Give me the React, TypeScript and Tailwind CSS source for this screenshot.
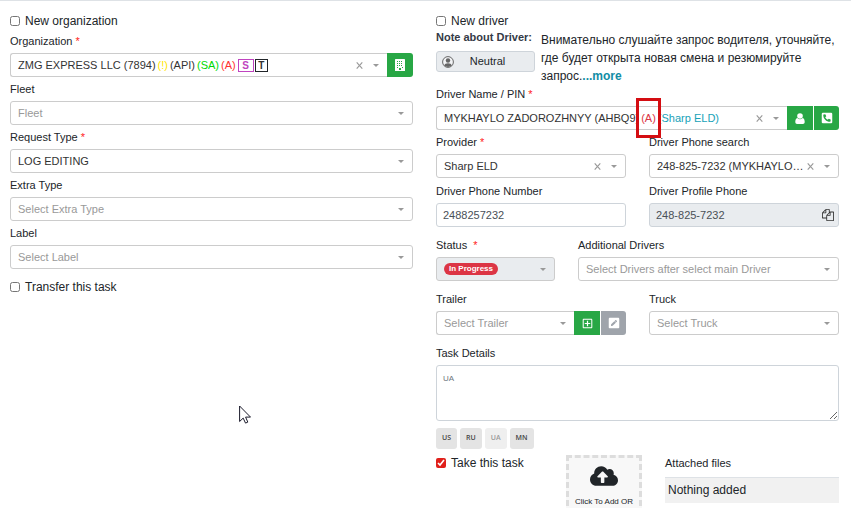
import React from "react";
import { FaPhoneSquareAlt, FaRegPlusSquare, FaPenSquare, FaCloudUploadAlt } from "react-icons/fa";

function Caret() {
  return (
    <svg viewBox="0 0 6 3" className="h-[3px] w-[6px] shrink-0 fill-[#999]" aria-hidden="true">
      <path d="M0 0h6L3 3z" />
    </svg>
  );
}

function ClearButton({ label }: { label: string }) {
  return (
    <button type="button" aria-label={label} className="shrink-0 text-[#999]">
      <svg viewBox="0 0 8 8" className="h-[7px] w-[7px] fill-none stroke-current" aria-hidden="true">
        <path d="M.8.5l6.4 7M7.2.5l-6.4 7" strokeWidth="1.3" />
      </svg>
    </button>
  );
}

function BuildingIcon() {
  return (
    <svg viewBox="0 0 10 12" className="h-3 w-[10px]" aria-hidden="true">
      <rect width="10" height="12" rx=".6" fill="#fff" />
      <g fill="#28a745">
        <path d="M2 2h1v1H2zM4 2h1v1H4zM6 2h1v1H6zM2 4h1v1H2zM4 4h1v1H4zM6 4h1v1H6zM2 6h1v1H2zM4 6h1v1H4zM6 6h1v1H6zM2 8h1v1H2zM7 8h1v1H7zM4 9h2v2H4z" />
      </g>
    </svg>
  );
}

function UserIcon() {
  return (
    <svg viewBox="0 0 10 11" className="h-[11px] w-[10px] fill-white" aria-hidden="true">
      <circle cx="5" cy="3" r="2.8" />
      <path d="M2.4 5c.7.8 1.600 1.200 2.600 1.200S6.900 5.800 7.600 5C9.300 5.300 9.700 7.200 9.700 9c0 1.200-.7 2-1.800 2H2.100C1 11 .3 10.200.3 9 .3 7.200.7 5.300 2.400 5z" />
    </svg>
  );
}

function FaceIcon() {
  return (
    <svg viewBox="0 0 12 12" className="size-3 shrink-0" aria-hidden="true">
      <circle cx="6" cy="6" r="5.400" fill="#fff" fillOpacity=".4" stroke="#666" strokeWidth="1" />
      <circle cx="6" cy="4.500" r="2.200" fill="#666" />
      <path d="M2.300 9.600C2.600 8 4 7.200 6 7.200s3.400.8 3.700 2.400C8.700 10.600 7.400 11 6 11s-2.700-.4-3.700-1.400z" fill="#666" />
    </svg>
  );
}

function FilesIcon() {
  return (
    <svg viewBox="0 0 1792 1792" className="size-3 fill-[#333]" aria-hidden="true">
      <path d="M1696 384q40 0 68 28t28 68v1216q0 40-28 68t-68 28h-960q-40 0-68-28t-28-68v-288h-544q-40 0-68-28t-28-68v-672q0-40 20-88t48-76l408-408q28-28 76-48t88-20h416q40 0 68 28t28 68v328q68-40 128-40h416zm-544 213l-299 299h299v-299zm-640-384l-299 299h299v-299zm196 647l316-316v-416h-384v416q0 40-28 68t-68 28h-416v640h512v-256q0-40 20-88t48-76zm956 804v-1152h-384v416q0 40-28 68t-68 28h-416v640h896z" />
    </svg>
  );
}

function Label({ htmlFor, required, children }: { htmlFor: string; required?: boolean; children: React.ReactNode }) {
  return (
    <label htmlFor={htmlFor} className="block h-4 text-[11px] leading-4 whitespace-nowrap">
      {children}
      {required && <span className="text-[#f22]"> *</span>}
    </label>
  );
}

function Check({ id, label, checked }: { id: string; label: string; checked?: boolean }) {
  return (
    <div className="flex h-4 items-center gap-[5px]">
      <input id={id} type="checkbox" defaultChecked={checked} className="size-[10px] accent-[#e0201b]" />
      <label htmlFor={id} className="text-[12px] leading-4">
        {label}
      </label>
    </div>
  );
}

function SelectBox({
  id,
  value,
  placeholder,
  clearLabel,
  joined,
}: {
  id: string;
  value: string;
  placeholder?: boolean;
  clearLabel?: string;
  joined?: boolean;
}) {
  return (
    <div
      className={
        "relative flex h-6 min-w-0 flex-1 items-center border border-[#ccc] bg-white " +
        (joined ? "rounded-l-[3px] border-r-0" : "rounded-[3px]")
      }
    >
      <select
        id={id}
        className={
          "h-full w-full min-w-0 appearance-none truncate bg-transparent pl-[7px] text-[11px] outline-none " +
          (clearLabel ? "pr-8 " : "pr-5 ") +
          (placeholder ? "text-[#999]" : "text-[#333]")
        }
      >
        <option>{value}</option>
      </select>
      <div className="pointer-events-none absolute inset-y-0 right-2 flex items-center gap-[10px]">
        {clearLabel && <ClearButton label={clearLabel} />}
        <Caret />
      </div>
    </div>
  );
}

function Field({
  id,
  label,
  required,
  children,
}: {
  id: string;
  label: string;
  required?: boolean;
  children: React.ReactNode;
}) {
  return (
    <div className="flex min-w-0 flex-col gap-1">
      <Label htmlFor={id} required={required}>
        {label}
      </Label>
      <div className="flex">{children}</div>
    </div>
  );
}

const iconButton = "flex h-6 w-[26px] shrink-0 items-center justify-center text-white";

function OrganizationColumn() {
  return (
    <section className="flex min-w-0 flex-col gap-1">
      <Check id="new-org" label="New organization" />
      <Field id="org" label="Organization" required>
        <div className="flex h-6 min-w-0 flex-1 items-center rounded-l-[3px] border border-r-0 border-[#ccc] pr-2 pl-[7px]">
          <button
            id="org"
            type="button"
            role="combobox"
            aria-expanded="false"
            className="flex min-w-0 flex-1 items-center gap-[2px] text-left text-[11px] whitespace-nowrap text-[#333]"
          >
            <span>ZMG EXPRESS LLC (7894)</span>
            <span className="text-[#ffe600]">(!)</span>
            <span>(API)</span>
            <span className="text-[#00d900]">(SA)</span>
            <span className="text-[#ff2f2f]">(A)</span>
            <span className="flex gap-px">
              <span className="h-[13px] w-4 border border-[#c044c0] text-center text-[10px] leading-[12px] font-bold text-[#c044c0]">
                S
              </span>
              <span className="h-[13px] w-[13px] border border-[#212529] text-center text-[10px] leading-[12px] font-bold">
                T
              </span>
            </span>
          </button>
          <div className="flex items-center gap-[10px]">
            <ClearButton label="Clear organization" />
            <Caret />
          </div>
        </div>
        <button type="button" aria-label="Organization details" className={iconButton + " rounded-r-[3px] bg-[#28a745]"}>
          <BuildingIcon />
        </button>
      </Field>
      <Field id="fleet" label="Fleet">
        <SelectBox id="fleet" value="Fleet" placeholder />
      </Field>
      <Field id="request" label="Request Type" required>
        <SelectBox id="request" value="LOG EDITING" />
      </Field>
      <Field id="extra" label="Extra Type">
        <SelectBox id="extra" value="Select Extra Type" placeholder />
      </Field>
      <Field id="label" label="Label">
        <SelectBox id="label" value="Select Label" placeholder />
      </Field>
      <div className="pt-[6px]">
        <Check id="transfer" label="Transfer this task" />
      </div>
    </section>
  );
}

function DriverNote() {
  return (
    <div className="flex gap-[6px]">
      <div className="w-[99px] shrink-0">
        <div className="text-[11px] leading-4 font-bold whitespace-nowrap text-[#343a46]">Note about Driver:</div>
        <button
          type="button"
          className="mt-[6px] flex h-[21px] w-full items-center rounded-[3px] border border-[#ced4da] bg-[#e9ecef] px-[5px] text-[11px]"
        >
          <FaceIcon />
          <span className="flex-1 pr-3 pl-1 text-center">Neutral</span>
        </button>
      </div>
      <p className="pt-[2px] text-[12px] leading-[18px]">
        Внимательно слушайте запрос водителя, уточняйте, где будет открыта новая смена и резюмируйте запрос.
        <a href="#more" className="font-bold text-[#138da5]">
          ...more
        </a>
      </p>
    </div>
  );
}

const langs = [
  { code: "US", active: false },
  { code: "RU", active: false },
  { code: "UA", active: true },
  { code: "MN", active: false },
];

function DriverColumn() {
  return (
    <section className="flex min-w-0 flex-col">
      <Check id="new-driver" label="New driver" />
      <DriverNote />
      <div className="flex flex-col gap-1 pt-px">
        <Field id="driver" label="Driver Name / PIN" required>
          <div className="flex h-6 min-w-0 flex-1 items-center rounded-l-[3px] border border-r-0 border-[#ccc] pr-2 pl-[7px]">
            <button
              id="driver"
              type="button"
              role="combobox"
              aria-expanded="false"
              className="flex min-w-0 flex-1 items-center gap-[2px] text-left text-[11px] whitespace-nowrap text-[#333]"
            >
              <span>MYKHAYLO ZADOROZHNYY (AHBQ9)</span>
              <span className="relative text-[#dc3545]">
                (A)
                <span className="absolute -inset-x-[5px] -top-3 -bottom-3 border-3 border-[#d40d12]" />
              </span>
              <span className="text-[#17a2b8]">(Sharp ELD)</span>
            </button>
            <div className="flex items-center gap-[10px]">
              <ClearButton label="Clear driver" />
              <Caret />
            </div>
          </div>
          <button type="button" aria-label="Driver profile" className={iconButton + " bg-[#28a745]"}>
            <UserIcon />
          </button>
          <button
            type="button"
            aria-label="Call driver"
            className={iconButton + " rounded-r-[3px] border-l border-white bg-[#28a745]"}
          >
            <FaPhoneSquareAlt className="size-3" />
          </button>
        </Field>
        <div className="grid grid-cols-2 gap-x-[23px] gap-y-[5px]">
          <Field id="provider" label="Provider" required>
            <SelectBox id="provider" value="Sharp ELD" clearLabel="Clear provider" />
          </Field>
          <Field id="phone-search" label="Driver Phone search">
            <SelectBox id="phone-search" value="248-825-7232 (MYKHAYLO ZADOROZHNYY)" clearLabel="Clear phone" />
          </Field>
          <Field id="phone" label="Driver Phone Number">
            <input
              id="phone"
              type="text"
              defaultValue="2488257232"
              className="h-6 w-full min-w-0 rounded-[3px] border border-[#ced4da] px-[6px] text-[11px] text-[#495057] outline-none"
            />
          </Field>
          <Field id="profile-phone" label="Driver Profile Phone">
            <div className="flex h-6 min-w-0 flex-1 items-center rounded-[3px] border border-[#ced4da] bg-[#e9ecef] pr-1 pl-[6px]">
              <input
                id="profile-phone"
                type="text"
                readOnly
                defaultValue="248-825-7232"
                className="min-w-0 flex-1 bg-transparent text-[11px] text-[#495057] outline-none"
              />
              <button type="button" aria-label="Copy phone">
                <FilesIcon />
              </button>
            </div>
          </Field>
        </div>
      </div>
      <div className="flex flex-col gap-[10px] pt-[10px]">
        <div className="grid grid-cols-[119fr_261fr] gap-x-[23px]">
          <Field id="status" label={"Status\u00a0"} required>
            <button
              id="status"
              type="button"
              role="combobox"
              aria-expanded="false"
              className="flex h-6 min-w-0 flex-1 items-center justify-between rounded-[3px] border border-[#ccc] bg-[#e9ecef] pr-2 pl-[7px]"
            >
              <span className="rounded-full bg-[#dc3545] px-[5px] text-[8px] leading-3 font-bold text-white">
                In Progress
              </span>
              <Caret />
            </button>
          </Field>
          <Field id="additional" label="Additional Drivers">
            <SelectBox id="additional" value="Select Drivers after select main Driver" placeholder />
          </Field>
        </div>
        <div className="grid grid-cols-2 gap-x-[23px]">
          <Field id="trailer" label="Trailer">
            <SelectBox id="trailer" value="Select Trailer" placeholder joined />
            <button type="button" aria-label="Add trailer" className={iconButton + " bg-[#28a745]"}>
              <FaRegPlusSquare className="size-[11px]" />
            </button>
            <button
              type="button"
              aria-label="Edit trailer"
              className={iconButton + " rounded-r-[3px] border-l border-white bg-[#9fa4ab]"}
            >
              <FaPenSquare className="size-3" />
            </button>
          </Field>
          <Field id="truck" label="Truck">
            <SelectBox id="truck" value="Select Truck" placeholder />
          </Field>
        </div>
        <Field id="details" label="Task Details">
          <textarea
            id="details"
            placeholder="UA"
            className="block h-14 w-full rounded-[3px] border border-[#ced4da] px-[6px] py-[7px] text-[8px] leading-3 outline-none placeholder:text-[#6c757d]"
          />
        </Field>
      </div>
      <div className="flex gap-[3px] pt-[7px]">
        {langs.map((l) => (
          <button
            key={l.code}
            type="button"
            className={
              "h-[21px] rounded-[3px] px-[6px] font-['Open_Sans',sans-serif] text-[7px] font-semibold " +
              (l.active ? "bg-[#efefef] text-[#999]" : "bg-[#e4e4e4] text-[#444]")
            }
          >
            {l.code}
          </button>
        ))}
      </div>
      <div className="flex pt-[6px]">
        <div className="min-w-0 flex-1">
          <Check id="take" label="Take this task" checked />
        </div>
        <button
          type="button"
          className="mr-[23px] flex h-24 w-[76px] shrink-0 flex-col items-center border-3 border-dashed border-[#ddd] bg-[#f8f8f8] pt-1 text-[8px] whitespace-nowrap"
        >
          <FaCloudUploadAlt className="size-7 text-[#212529]" />
          <span className="pt-1 leading-4">Click To Add OR</span>
        </button>
        <div className="w-[174px] shrink-0">
          <h2 className="text-[11px] leading-4">Attached files</h2>
          <div className="mt-[6px] border-t border-[#dee2e6] bg-[#f1f1f1] px-[3px] py-1 text-[12px] leading-[17px]">
            Nothing added
          </div>
        </div>
      </div>
    </section>
  );
}

export default function App() {
  return (
    <main className="relative h-screen overflow-hidden border-t border-[#dee2e6] bg-white pt-3 pr-3 pl-[10px] font-['Liberation_Sans',Arial,sans-serif] text-[#212529]">
      <form className="grid grid-cols-2 gap-x-[23px]">
        <OrganizationColumn />
        <DriverColumn />
      </form>
      <svg viewBox="0 0 12 19" className="absolute top-[404px] left-[239px] h-[19px] w-3" aria-hidden="true">
        <path
          d="M.6 1v15.5l3.6-3.4 2.3 5 2.3-1-2.2-5h4.9z"
          fill="#fff"
          stroke="#1a1a2a"
          strokeWidth="1"
          strokeLinejoin="round"
        />
      </svg>
    </main>
  );
}
